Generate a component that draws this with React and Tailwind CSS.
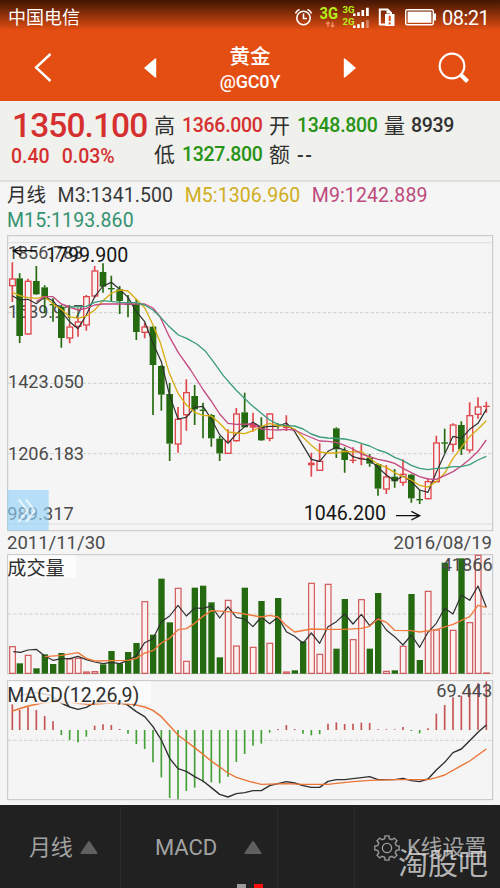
import React from 'react';

const FONT = "font-['Roboto','Noto_Sans_CJK_SC',sans-serif]";
const RED = '#e0474a';
const GREEN = '#256a10';

// chart coordinates are in thirds of a pixel
const STEP = 25;
const barX = (i) => (i === 0 ? 37 : 34 + STEP * i);

// [index, up, high, bodyTop, bodyBottom, low]
const candles = [
    [0, 1, 97, 146, 168, 216], [1, 0, 130, 145, 318, 339], [2, 1, 146, 153, 313, 315], [3, 0, 108, 153, 193, 195],
    [4, 0, 166, 172, 208, 250], [5, 0, 205, 222, 226, 275], [6, 0, 225, 230, 324, 353], [7, 1, 280, 290, 325, 340],
    [8, 1, 262, 275, 290, 320], [9, 1, 195, 199, 286, 302], [10, 1, 108, 122, 199, 203], [11, 0, 100, 126, 170, 188],
    [12, 0, 137, 174, 178, 215], [13, 0, 168, 178, 213, 252], [14, 0, 195, 221, 225, 262], [15, 0, 207, 222, 306, 330],
    [16, 1, 278, 290, 308, 325], [17, 0, 288, 290, 405, 555], [18, 0, 406, 408, 494, 542], [19, 0, 459, 492, 641, 693],
    [20, 1, 531, 567, 643, 668], [21, 1, 448, 487, 555, 602], [22, 0, 465, 498, 538, 585], [23, 0, 518, 539, 543, 625],
    [24, 0, 552, 555, 625, 650], [25, 0, 618, 626, 670, 693], [26, 1, 598, 633, 671, 672], [27, 1, 534, 551, 633, 635],
    [28, 0, 488, 547, 592, 592], [29, 1, 548, 580, 593, 605], [30, 0, 562, 588, 631, 633], [31, 1, 549, 551, 626, 634],
    [32, 0, 580, 584, 588, 596], [33, 1, 556, 586, 594, 603], [36, 1, 668, 698, 706, 740], [37, 1, 640, 693, 722, 723],
    [39, 0, 592, 595, 658, 684], [40, 0, 652, 661, 690, 728], [41, 1, 652, 689, 693, 700], [42, 1, 643, 683, 688, 706],
    [43, 0, 672, 683, 701, 710], [44, 0, 700, 702, 776, 797], [45, 1, 705, 740, 778, 792], [46, 0, 717, 740, 754, 773],
    [47, 1, 688, 732, 758, 767], [48, 0, 732, 734, 805, 818], [49, 0, 780, 807, 811, 822], [50, 1, 745, 754, 807, 808],
    [51, 1, 617, 638, 756, 757], [52, 0, 596, 637, 641, 668], [53, 1, 580, 584, 644, 666], [54, 0, 574, 585, 658, 675],
    [55, 1, 517, 556, 661, 668], [56, 1, 502, 530, 554, 566], [57, 1, 515, 527, 531, 548],
];

const m3 = '37,197 59,210 84,208 109,221 134,200 159,212 184,245 209,275 234,296 259,255 284,200 309,168 334,157 359,178 384,202 409,245 434,275 459,340 484,395 509,497 534,567 559,562 584,532 609,529 634,567 659,614 684,640 709,612 734,590 759,577 784,592 809,589 834,589 859,579 884,605 934,688 959,694 984,664 1009,652 1034,660 1059,680 1084,687 1109,690 1134,712 1159,735 1184,753 1209,738 1234,755 1259,780 1284,787 1309,727 1334,672 1359,619 1384,625 1409,598 1434,580 1459,538';
const m5 = '37,187 59,197 84,203 109,205 134,200 159,222 184,238 209,260 234,265 259,258 284,240 309,212 334,190 359,180 384,183 409,208 434,233 459,285 480,335 508,430 534,490 559,525 584,547 609,556 634,558 659,580 684,606 709,609 734,611 759,602 784,590 809,580 834,588 859,587 884,597 909,622 934,646 959,666 984,669 1009,669 1034,664 1059,666 1084,664 1109,685 1134,703 1159,712 1184,728 1209,740 1234,750 1259,766 1284,771 1309,755 1334,730 1359,685 1384,652 1409,620 1434,597 1459,572';
const m9 = '109,215 134,200 159,200 184,222 209,231 234,240 259,235 284,225 309,222 384,222 434,222 459,234 480,260 508,320 535,368 572,420 610,480 635,515 659,552 684,580 709,583 759,582 784,597 809,599 834,600 859,598 884,600 909,612 959,633 984,634 1009,637 1034,646 1059,657 1084,672 1134,688 1159,693 1184,700 1209,715 1234,728 1259,740 1284,747 1309,748 1334,737 1359,725 1384,708 1409,688 1434,664 1459,630';
const m15 = '209,231 259,229 284,217 309,212 359,217 409,218 434,225 459,240 480,260 505,287 535,315 560,325 590,342 615,362 640,395 670,437 708,480 750,521 784,550 809,570 834,583 859,587 884,588 909,597 934,612 959,621 984,624 1034,627 1059,632 1084,640 1109,648 1134,660 1159,668 1184,682 1209,692 1234,706 1259,715 1284,719 1309,715 1334,714 1359,710 1384,710 1409,704 1434,690 1459,679';

// [up, top]
const volumes = [
    [1, 305], [0, 355], [1, 331], [0, 370], [0, 328], [0, 357], [0, 324], [1, 342], [1, 340], [1, 381],
    [1, 380], [0, 358], [0, 318], [0, 355], [0, 321], [0, 294], [1, 170], [0, 269], [0, 101], [0, 232],
    [1, 130], [1, 349], [0, 128], [0, 122], [0, 172], [0, 337], [1, 166], [1, 303], [0, 128], [1, 307],
    [0, 168], [1, 295], [0, 159], [1, 381], [0, 376], [0, 289], [1, 115], [1, 328], [1, 118], [0, 311],
    [0, 162], [1, 284], [1, 164], [0, 311], [0, 144], [1, 379], [0, 376], [1, 304], [0, 147], [0, 345],
    [1, 139], [1, 255], [0, 53], [1, 256], [0, 40], [1, 233], [1, 31], [1, 384],
];
const volFast = '40,320 62,322 84,315 109,313 134,333 159,346 184,341 209,341 234,334 259,344 284,351 309,356 334,352 359,356 384,346 409,332 434,293 459,281 484,230 509,213 534,181 559,213 584,189 609,190 634,183 659,219 684,185 709,217 734,222 759,245 784,216 809,236 834,216 859,260 884,274 909,295 934,264 959,295 984,245 1009,230 1034,207 1059,237 1084,208 1109,242 1134,219 1159,255 1184,275 1209,300 1234,270 1259,307 1284,262 1309,235 1334,190 1359,207 1384,150 1409,166 1434,123 1459,187';
const volSlow = '134,335 184,331 234,323 259,340 284,348 334,347 384,346 409,340 434,324 459,317 484,294 509,280 534,254 559,251 584,235 609,214 634,197 684,200 709,203 750,210 784,216 809,211 834,216 859,242 884,261 934,252 984,253 1034,253 1084,250 1109,244 1134,222 1159,232 1184,256 1234,257 1259,261 1309,254 1359,238 1409,215 1434,181 1459,187';

const macdBars = [
    88, 105, 95, 105, 123, 139, 180, 195, 202, 185, 152, 148, 150, 162, 176, 207, 222, 262, 307, 369,
    373, 348, 338, 322, 322, 325, 305, 261, 237, 212, 206, 173, 162, 150, 162, 176, 181, 178, 146, 142,
    147, 146, 143, 144, 163, 163, 163, 156, 168, 175, 160, 116, 90, 67, 62, 40, 25, 19,
];
const dif = '37,72 60,62 100,52 150,60 185,85 209,96 234,103 259,97 280,85 330,76 380,88 409,110 434,125 459,155 484,195 509,250 534,281 559,289 584,305 609,318 634,338 659,358 684,366 709,356 734,353 759,347 784,347 809,332 859,320 884,324 909,332 934,337 959,337 984,319 1009,314 1034,314 1084,308 1109,305 1134,314 1184,314 1209,310 1234,317 1259,320 1284,312 1309,285 1334,262 1359,233 1384,222 1409,197 1434,172 1459,150';
const dea = '37,108 84,93 134,83 200,80 234,85 270,88 334,84 400,88 434,96 459,106 484,125 509,152 534,180 584,218 634,258 684,294 709,307 750,320 784,328 859,326 909,328 984,328 1009,325 1059,320 1109,316 1184,314 1284,314 1309,308 1334,300 1384,272 1409,258 1459,222';

function Line({ points, color, width = 3.6 }) {
    return <polyline points={points} fill="none" stroke={color} strokeWidth={width} strokeLinejoin="round" />;
}

function Dash({ y }) {
    return <line x1="24" x2="1477" y1={y} y2={y} stroke="#cfcfcf" strokeWidth="3" strokeDasharray="10 6" />;
}

function Label({ x, y, w, size = 56, color = '#4b4b4b', children }) {
    return (
        <text x={x} y={y} fontSize={size} fill={color} textLength={w} lengthAdjust="spacingAndGlyphs">{children}</text>
    );
}

function StatusBar() {
    return (
        <div className="flex h-9 items-center justify-between pl-2 pr-[10px] text-white">
            <span className="text-[18px] leading-none">中国电信</span>
            <div className="flex items-center">
                <svg width="150" height="36" viewBox="0 0 150 36" fill="none">
                    <g stroke="#fff" strokeWidth="1.6">
                        <circle cx="11.5" cy="18" r="6.7" />
                        <path d="M11.5 13.5V18.5H15" />
                        <path d="M3.5 13.5Q4.5 10.5 7.5 9.5M19.5 13.5Q18.5 10.5 15.5 9.5" />
                    </g>
                    <g fill="#b4ee1a" fontWeight="700">
                        <text x="27.5" y="18.5" fontSize="16" textLength="18.5" lengthAdjust="spacingAndGlyphs">3G</text>
                        <text x="50.5" y="12.5" fontSize="9.5" textLength="12" lengthAdjust="spacingAndGlyphs">3G</text>
                        <text x="50.5" y="24.5" fontSize="9.5" textLength="12" lengthAdjust="spacingAndGlyphs">2G</text>
                    </g>
                    <path d="M36 22V27M34.2 24L36 22L37.8 24M40.5 22V27M38.7 25L40.5 27L42.3 25" stroke="#ee8a5c" strokeWidth="1.4" />
                    <g fill="#fff">
                        <path d="M61 13.5h2.6V16H61zM65.2 12.3h2.6V16h-2.6zM69.5 10h2.6v6h-2.6zM74 7.8h2.8V16H74z" />
                        <path d="M61 25.5h2.6V28H61zM65.2 24.3h2.6V28h-2.6zM69.5 22h2.6v6h-2.6z" />
                        <path d="M74 20h2.8v8H74z" opacity=".35" />
                    </g>
                    <path d="M94.5 24.5H87.8V9.5H95.5L99 13V14.5" stroke="#fff" strokeWidth="2" />
                    <path d="M94.5 9.5h2l3.5 4h-5.5z" fill="#fff" />
                    <rect x="93" y="14" width="9.5" height="12" fill="#fff" />
                    <path d="M97.7 15.8V21M97.7 22.2V24.4" stroke="#e24c12" strokeWidth="2" />
                    <rect x="113.7" y="9.7" width="27.6" height="15" rx="1.5" stroke="#fff" strokeWidth="1.4" />
                    <rect x="115.6" y="11.6" width="23.8" height="11.2" fill="#fff" />
                    <path d="M142 13.5h2v7h-2z" fill="#fff" />
                </svg>
                <span className="w-[48px] whitespace-nowrap text-[20px] leading-none tracking-[-0.5px]">08:21</span>
            </div>
        </div>
    );
}

function TitleBar() {
    return (
        <div className="flex h-[64px] items-center justify-between pl-[34px] pr-[30px] text-white">
            <div className="flex w-[123px] items-center justify-between">
                <svg width="18" height="30" viewBox="0 0 18 30" fill="none" stroke="#fff" strokeWidth="2.4">
                    <path d="M16.5 1L2 14.5L16.5 28" />
                </svg>
                <svg width="13" height="20" viewBox="0 0 13 20" fill="#fff"><path d="M11 .5h1.2v19H11L0 10z" /></svg>
            </div>
            <div className="flex flex-col items-center pt-[2px]">
                <span className="text-[20.5px] font-medium leading-[25px]">黄金</span>
                <span className="text-[18px] font-medium leading-[23px] tracking-[-0.2px]">@GC0Y</span>
            </div>
            <div className="flex w-[127px] items-center justify-between">
                <svg width="13" height="20" viewBox="0 0 13 20" fill="#fff"><path d="M2 .5H.8v19H2L13 10z" /></svg>
                <svg width="32" height="32" viewBox="0 0 32 32" fill="none" stroke="#fff">
                    <circle cx="14" cy="14" r="12.3" strokeWidth="2.2" />
                    <path d="M22.8 22.8L29.5 29.5" strokeWidth="4.2" />
                </svg>
            </div>
        </div>
    );
}

function Quote() {
    return (
        <div className="flex h-[81px] border-b-2 border-[#dfe0da] bg-[#f0f0ec] pl-[11px] pt-[9px] text-[19.5px] text-[#303030]">
            <div className="w-[143px] shrink-0 text-[#d5302f]">
                <div className="whitespace-nowrap pl-[1px] text-[33.5px] font-medium leading-[31px] tracking-[-0.9px]">1350.100</div>
                <div className="flex gap-[12px] pt-[1px] font-medium leading-[29px]">
                    <span>0.40</span>
                    <span>0.03%</span>
                </div>
            </div>
            <div className="grid h-[60px] grid-cols-[28px_87px_28px_87px_27px_60px] grid-rows-2 items-center whitespace-nowrap pt-px font-medium leading-[30px] tracking-[-0.3px]">
                <span className="text-[21px] font-normal">高</span>
                <span className="text-[#d5302f]">1366.000</span>
                <span className="text-[21px] font-normal">开</span>
                <span className="text-[#269314]">1348.800</span>
                <span className="text-[21px] font-normal">量</span>
                <span>8939</span>
                <span className="text-[21px] font-normal">低</span>
                <span className="text-[#269314]">1327.800</span>
                <span className="text-[21px] font-normal">额</span>
                <span className="pt-[2px] tracking-[1.5px]">--</span>
            </div>
        </div>
    );
}

function Averages() {
    return (
        <div className="flex h-12 flex-wrap content-start gap-x-[11.5px] whitespace-nowrap pl-[7px] pt-[2px] text-[19.5px] leading-[24.5px]">
            <span className="text-[#303030]">月线</span>
            <span className="tracking-[0.1px] text-[#383838]">M3:1341.500</span>
            <span className="tracking-[0.1px] text-[#cfad20]">M5:1306.960</span>
            <span className="tracking-[0.1px] text-[#bd4a7c]">M9:1242.889</span>
            <span className="tracking-[0.1px] text-[#349270]">M15:1193.860</span>
        </div>
    );
}

function PriceChart() {
    return (
        <svg className="block" width="500" height="302" viewBox="0 0 1500 906">
            <rect x="23" y="17" width="1455" height="885" fill="none" stroke="#c4c4c4" strokeWidth="3" />
            <path d="M24 38H1476M24 882H1476" stroke="#dedede" strokeWidth="3" />
            <Dash y={248} />
            <Dash y={460} />
            <Dash y={671} />
            <Label x={24} y={87} w={226}>1856.783</Label>
            <Label x={24} y={265} w={226}>1639.917</Label>
            <Label x={24} y={475} w={228}>1423.050</Label>
            <Label x={24} y={689} w={228}>1206.183</Label>
            <Label x={22} y={870} w={199}>989.317</Label>
            {candles.map(([i, up, hi, top, bottom, lo]) => {
                const x = barX(i);
                const color = up ? RED : GREEN;
                const thin = bottom - top < 14;
                return (
                    <g key={i} stroke={color}>
                        <path d={`M${x} ${hi}V${top}M${x} ${bottom}V${lo}`} strokeWidth="5" />
                        {thin && <path d={`M${x} ${top}V${bottom}`} strokeWidth="5" />}
                        {up && !thin
                            ? <rect x={x - 8} y={top + 1} width="17" height={bottom - top - 2} fill="#f5f5f5" strokeWidth="4" />
                            : <rect x={x - 10} y={top} width="20" height={bottom - top} fill={color} stroke="none" />}
                    </g>
                );
            })}
            <path d="M209 225V280M234 232V262" stroke={GREEN} strokeWidth="3" />
            <Line points={m3} color="#303030" />
            <Line points={m5} color="#d9ad12" width={4} />
            <Line points={m9} color="#c44a82" width={4} />
            <Line points={m15} color="#3c9c7c" width={4} />
            <path d="M110 62H40M64 48L40 62L64 76" fill="none" stroke="#111" strokeWidth="4" />
            <Label x={138} y={97} w={247} size={59} color="#151515">1799.900</Label>
            <Label x={911} y={870} w={247} size={59} color="#151515">1046.200</Label>
            <path d="M1188 857H1258M1234 844L1259 857L1234 870" fill="none" stroke="#111" strokeWidth="4" />
            <rect x="22" y="780" width="124" height="122" fill="#8fd2f8" opacity=".62" />
            <path d="M56 808L82 842L56 876M78 808L104 842L78 876" fill="none" stroke="#fff" strokeWidth="6" opacity=".7" />
        </svg>
    );
}

function VolumeChart() {
    return (
        <svg className="block" width="500" height="121" viewBox="0 27 1500 363">
            <rect x="23" y="29" width="1455" height="357" fill="none" stroke="#c4c4c4" strokeWidth="3" />
            <Dash y={207} />
            {volumes.map(([up, top], i) => {
                const x = barX(i);
                return up
                    ? <rect key={i} x={x - 8} y={top} width="17" height={Math.max(385 - top, 1)} fill="#fcf1f0" stroke="#cf5555" strokeWidth="3.5" />
                    : <rect key={i} x={x - 9} y={top} width="19" height={386 - top} fill={GREEN} />;
            })}
            <Line points={volFast} color="#303030" />
            <Line points={volSlow} color="#f07a3c" width={4.2} />
            <rect x="25" y="31" width="204" height="67" fill="#fcfcfc" />
            <Label x={22} y={91} w={172} size={58} color="#303030">成交量</Label>
            <Label x={1325} y={79} w={153} size={55}>41866</Label>
        </svg>
    );
}

function MacdChart() {
    return (
        <svg className="block" width="500" height="130" viewBox="0 0 1500 390">
            <rect x="23" y="17" width="1455" height="357" fill="none" stroke="#c4c4c4" strokeWidth="3" />
            <Dash y={196} />
            {macdBars.map((v, i) => (
                <path key={i} d={`M${barX(i)} 165V${v}`} stroke={v < 165 ? '#c65353' : '#43a037'} strokeWidth="5" />
            ))}
            <Line points={dif} color="#303030" width={4.2} />
            <Line points={dea} color="#ea7434" width={4.2} />
            <rect x="25" y="19" width="428" height="67" fill="#fcfcfc" opacity=".8" />
            <Label x={22} y={80} w={396} size={59} color="#303030">MACD(12,26,9)</Label>
            <Label x={1309} y={66} w={168}>69.443</Label>
        </svg>
    );
}

function gearPath() {
    const pts = [];
    for (let k = 0; k < 8; k++) {
        [[-14, 9.6], [-9, 12.3], [9, 12.3], [14, 9.6]].forEach(([a, r]) => {
            const t = ((k * 45 + a) * Math.PI) / 180;
            pts.push(`${(13 + r * Math.cos(t)).toFixed(2)} ${(13 + r * Math.sin(t)).toFixed(2)}`);
        });
    }
    return `M${pts.join('L')}Z`;
}

function Triangle() {
    return (
        <svg width="18" height="15" viewBox="0 0 18 15" fill="#606060" stroke="#606060" strokeWidth="2" strokeLinejoin="round">
            <path d="M9 2L16.5 13H1.5z" />
        </svg>
    );
}

function Toolbar() {
    return (
        <div className="relative flex h-[83px] bg-[#212121] pt-[2px] text-[22px] text-[#a2a2a2]">
            <div className="flex w-[121px] items-center gap-[8px] border-r border-[#2b2b2b] pl-[29px]">
                <span className="tracking-[-0.3px]">月线</span>
                <Triangle />
            </div>
            <div className="flex w-[157px] items-center gap-[27px] border-r border-[#2b2b2b] pl-[34px]">
                <span className="tracking-[-0.1px]">MACD</span>
                <Triangle />
            </div>
            <div className="w-[77px] border-r border-[#2b2b2b]" />
            <div className="flex flex-1 items-center gap-[7px] whitespace-nowrap pl-[19px]">
                <svg width="26" height="26" viewBox="0 0 26 26" fill="none" stroke="#9a9a9a" strokeWidth="1.4">
                    <path d={gearPath()} />
                    <circle cx="13" cy="13" r="4.6" />
                </svg>
                <span className="text-[22px] tracking-[-0.2px]">K线设置</span>
            </div>
            <span className="absolute right-[12px] top-[41px] text-[30px] leading-[36px] text-[#dcdcdc]/80">淘股吧</span>
            <div className="absolute bottom-0 left-[237px] flex gap-2">
                <span className="h-1 w-[9px] bg-[#9b9b9b]" />
                <span className="h-1 w-[9px] bg-[#fb0d0d]" />
            </div>
        </div>
    );
}

export default function App() {
    return (
        <div className={`h-[888px] w-[500px] overflow-hidden bg-[#f5f5f5] ${FONT}`}>
            <div className="h-[101px] bg-[#e44e13] bg-linear-to-b from-[#431603] to-[#e44e13] to-30%">
                <StatusBar />
                <TitleBar />
            </div>
            <Quote />
            <Averages />
            <PriceChart />
            <div className="flex h-[22px] items-center justify-between pl-[7px] pr-2 text-[18.5px] leading-none text-[#4b4b4b]">
                <span>2011/11/30</span>
                <span>2016/08/19</span>
            </div>
            <VolumeChart />
            <MacdChart />
            <Toolbar />
        </div>
    );
}
